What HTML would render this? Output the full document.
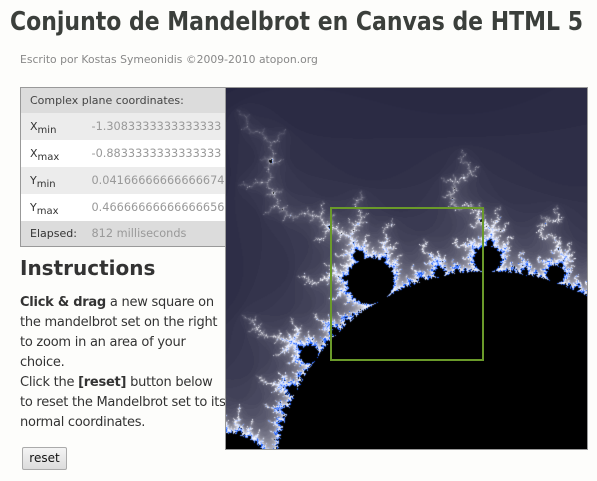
<!DOCTYPE html>
<html><head><meta charset="utf-8">
<style>
html,body{margin:0;padding:0;background:#fdfdfb;width:597px;height:481px;overflow:hidden;font-family:"DejaVu Sans","Liberation Sans",sans-serif;color:#333}
h1{position:absolute;left:10px;top:7px;margin:0;font-size:26px;font-weight:bold;color:#3b3f3b;white-space:nowrap;transform-origin:0 0}
.sub{position:absolute;left:20px;top:53px;font-size:10.8px;color:#888;white-space:nowrap}
table{position:absolute;left:20px;top:87px;width:206px;border-collapse:collapse;border:1px solid #999;font-size:11px;table-layout:fixed}
td{padding:0 0 0 9px;height:27px;white-space:nowrap;overflow:hidden}
tr.h td{background:#dcdcdc;height:25px;color:#444}
tr.g td{background:#ececec}
tr.w td{background:#fff}
td.v{color:#999;padding-left:0;font-size:11.3px}
sub{font-size:10px;vertical-align:-3px;line-height:0}
tr.e td{background:#dcdcdc;height:25px}
h2{position:absolute;left:20px;top:256px;margin:0;font-size:20px;font-weight:bold;color:#333}
.ins{position:absolute;left:20px;top:293px;width:206px;font-size:13px;letter-spacing:-0.25px;line-height:20px;color:#333}
.btn{position:absolute;left:22px;top:447px;width:43px;height:21px;border:1px solid #aaa;border-radius:2px;background:linear-gradient(#f4f4f4,#dcdcdc);font-size:12px;text-align:center;line-height:21px;color:#111}
#cv{position:absolute;left:225px;top:87px;border:1px solid #999;background:#20203a}
.sq{position:absolute;left:330px;top:207px;width:150px;height:150px;border:2px solid #6a9a2a}
</style></head><body>
<h1 id="t">Conjunto de Mandelbrot en Canvas de HTML 5</h1>
<div class="sub">Escrito por Kostas Symeonidis ©2009-2010 atopon.org</div>
<table>
<colgroup><col style="width:71px"><col style="width:135px"></colgroup>
<tr class="h"><td colspan="2">Complex plane coordinates:</td></tr>
<tr class="g"><td>X<sub>min</sub></td><td class="v">-1.3083333333333333</td></tr>
<tr class="w"><td>X<sub>max</sub></td><td class="v">-0.8833333333333333</td></tr>
<tr class="g"><td>Y<sub>min</sub></td><td class="v">0.04166666666666674</td></tr>
<tr class="w"><td>Y<sub>max</sub></td><td class="v">0.46666666666666656</td></tr>
<tr class="e"><td>Elapsed:</td><td class="v">812 milliseconds</td></tr>
</table>
<h2>Instructions</h2>
<div class="ins"><b>Click &amp; drag</b> a new square on the mandelbrot set on the right to zoom in an area of your choice.<br>Click the <b>[reset]</b> button below to reset the Mandelbrot set to its normal coordinates.</div>
<div class="btn">reset</div>
<canvas id="cv" width="361" height="361"></canvas>
<div class="sq"></div>
<script>
(function(){
var h=document.getElementById('t');var w=h.getBoundingClientRect().width;
if(w>0){h.style.transform='scaleX('+(573/w)+')';}
var c=document.getElementById('cv'),x=c.getContext('2d'),W=361,H=361;
var img=x.createImageData(W,H),d=img.data;
var x0=-1.3083333333333333,x1=-0.8833333333333333,y0=0.04166666666666674,y1=0.46666666666666656;
var M=300,nr=32,ng=32,nb=58;
for(var j=0;j<H;j++){var ci=y1-(y1-y0)*j/(H-1);
for(var i=0;i<W;i++){var cr=x0+(x1-x0)*i/(W-1);
var zr=0,zi=0,n=0;
while(n<M&&zr*zr+zi*zi<4){var t=zr*zr-zi*zi+cr;zi=2*zr*zi+ci;zr=t;n++;}
var r,g,b,k=(j*W+i)*4;
if(n>=M){r=g=b=0;}
else if(n<50){var t=Math.pow(n/50,1.4);r=nr+t*(250-nr);g=ng+t*(250-ng);b=nb+t*(255-nb);}
else{var t=Math.min(1,(n-50)/120);r=250*(1-t)+20*t;g=250*(1-t)+90*t;b=255;}
d[k]=r;d[k+1]=g;d[k+2]=b;d[k+3]=255;}}
x.putImageData(img,0,0);
})();
</script>
</body></html>
